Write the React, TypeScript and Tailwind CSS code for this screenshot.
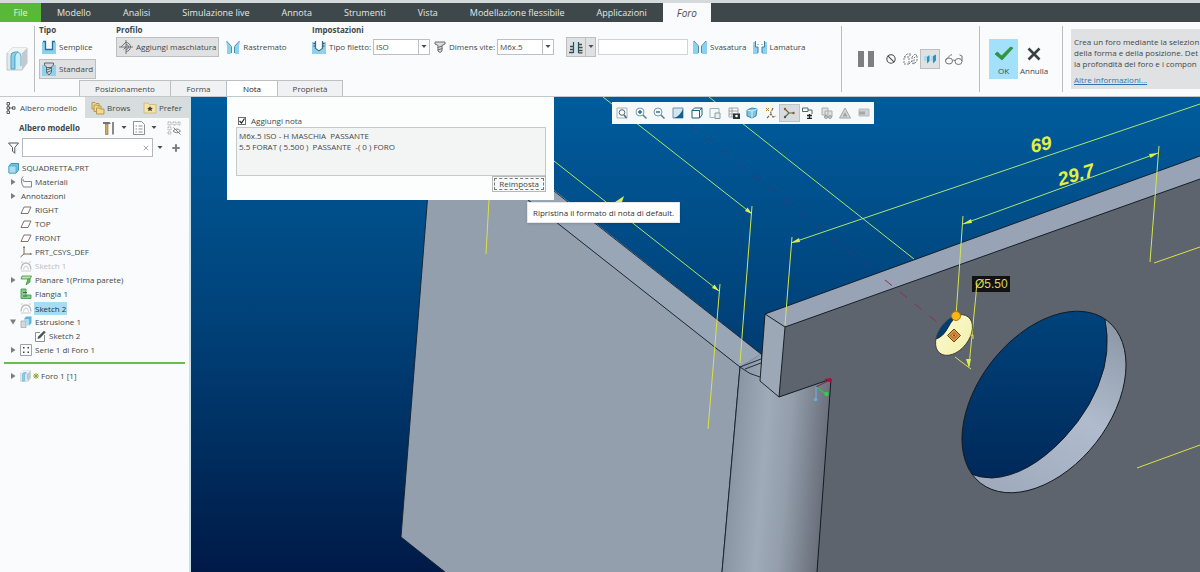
import React, { useState } from "react";
import { Ban, Plus, X } from "lucide-react";

// ---------- ribbon icons ----------

function HoleIcon({ className }: { className: string }) {
  return (
    <svg className={className} viewBox="0 0 22 24" fill="none">
      <path d="M1 6 6 1h15v15l-5 7H1z" fill="#e4e9ec" stroke="#b4bcc0" strokeWidth=".8" />
      <path d="M16 6v17l5-7V1z" fill="#c3cacf" />
      <path d="M1 6h15l5-5H6z" fill="#f2f5f6" />
      <path d="M5 22V9q0-4 4-4h3q-3 1-3 5v12z" fill="#8fd0e8" stroke="#4fa5c7" />
      <path d="M9 22V10q0-4 3-5 3 1 3 5v9" fill="#c9ecf7" stroke="#4fa5c7" strokeWidth=".8" />
    </svg>
  );
}

function SimpleIcon() {
  return (
    <svg className="size-3.5 shrink-0" viewBox="0 0 14 14" fill="none">
      <path d="M0 2h3v8h8V2h3v12H0z" fill="#8ed1ee" />
      <path d="M1 1.500h2.500v8h7v-8H13" stroke="#2b6f92" strokeWidth="1.300" />
    </svg>
  );
}

function StandardIcon() {
  return (
    <svg className="size-3.5 shrink-0" viewBox="0 0 14 14" fill="none">
      <path d="M0 3h14v11H0z" fill="#8ed1ee" />
      <path d="M2.500 1h9v2L9.500 5v5L7 13l-2.500-3V5l-2-2z" fill="#d5d8da" stroke="#5f666a" />
      <path d="m4.500 8 5-2m-5 4.500 5-2M4.500 5.500h5" stroke="#5f666a" />
    </svg>
  );
}

function TapIcon() {
  return (
    <svg className="size-3.5 shrink-0" viewBox="0 0 14 14" fill="none" stroke="#66696b" strokeWidth=".9">
      <path d="M0 7h14M7 0v14" />
      <path d="M7 2.500a4.500 4.500 0 0 1 0 9" />
      <path d="M7 4.500a2.500 2.500 0 0 1 0 5M2 7l5-5M4.500 9.500 7 7" />
    </svg>
  );
}

function TaperIcon() {
  return (
    <svg className="size-3.5 shrink-0" viewBox="0 0 14 14" fill="none">
      <path d="M0 1l5 5v8H1V6zM14 1 9 6v8h4V6z" fill="#8ed1ee" />
      <path d="m.500 1 5 5.500V13M13.500 1l-5 5.500V13" stroke="#4c8fac" />
    </svg>
  );
}

function ThreadIcon() {
  return (
    <svg className="size-3.5 shrink-0" viewBox="0 0 14 14" fill="none">
      <path d="M0 2h3v7l4 3 4-3V2h3v12H0z" fill="#8ed1ee" />
      <path d="M3.500 1v7.500L7 11l3.500-2.500V1" stroke="#3c6f88" strokeWidth="1.200" />
      <path d="M1.500 3.500h2M1.500 6h2M10.500 3.500h2M10.500 6h2" stroke="#3c4f58" />
    </svg>
  );
}

function ScrewIcon() {
  return (
    <svg className="size-3 shrink-0" viewBox="0 0 12 12" fill="none" stroke="#6a6e70">
      <path d="M1 1h10v2L8 4.500V10l-2 1.500L4 10V4.500L1 3z" fill="#d9dcdd" />
      <path d="m3.500 6.500 5-1.500m-5 4 5-1.500" />
    </svg>
  );
}

function DepthIcon() {
  return (
    <svg className="h-3.5 w-4" viewBox="0 0 16 14" fill="none">
      <path d="M6 1h4v12H6z" fill="#c4e6f2" />
      <path d="M5.500 2v11M10.500 2v11" stroke="#3f4a4f" strokeWidth="1.200" />
      <path d="M2 6.500h3.500M2 9.500h3.500M1 12.500h4.500M10.500 4.500H14M10.500 7.500h4M10.500 10.500h4M10.500 12.800h4" stroke="#3f4a4f" strokeWidth="1.300" />
    </svg>
  );
}

function CountersinkIcon() {
  return (
    <svg className="size-3.5 shrink-0" viewBox="0 0 14 14" fill="none">
      <path d="M0 1h1l4 5v8H0zM14 1h-1L9 6v8h5z" fill="#8ed1ee" />
      <path d="m1 1 4.500 5v7M13 1 8.500 6v7" stroke="#4c8fac" />
    </svg>
  );
}

function CounterboreIcon() {
  return (
    <svg className="size-3.5 shrink-0" viewBox="0 0 14 14" fill="none">
      <path d="M0 2h2v5h3v7H0zM14 2h-2v5H9v7h5z" fill="#8ed1ee" />
      <path d="M2.500 1v6H5v6M11.500 1v6H9v6" stroke="#3c7f9c" />
      <path d="M4.500 4.500h1M8.500 4.500h1" stroke="#3c7f9c" />
    </svg>
  );
}

function Caret({ className = "w-1.5" }: { className?: string }) {
  return (
    <svg className={className} viewBox="0 0 6 4">
      <path d="M.500 0h5L3 3z" fill="#4a4e50" />
    </svg>
  );
}

// ---------- ribbon ----------

const MENU = ["Modello", "Analisi", "Simulazione live", "Annota", "Strumenti", "Vista", "Modellazione flessibile", "Applicazioni"];

function MenuBar() {
  return (
    <nav className="flex h-[19px] bg-[#3e4749] text-[9px] text-[#e3e8e8]">
      <button className="w-[41px] bg-[#57b937] text-[#e2f5d6]">File</button>
      <div className="flex">
        {MENU.map((item) => (
          <button key={item} className="px-4 whitespace-nowrap">{item}</button>
        ))}
      </div>
      <button className="w-12 bg-[#f9fbfc] text-[10px] text-[#4a4f51] italic">Foro</button>
    </nav>
  );
}

function ToolButton({ icon, label, pressed }: { icon: React.ReactNode; label: string; pressed?: boolean }) {
  return (
    <button
      className={
        "flex h-5 items-center gap-[3px] border pr-0.5 pl-0.5 whitespace-nowrap " +
        (pressed ? "border-[#bcbfc0] bg-[#dfe1e2]" : "border-transparent")
      }
    >
      {icon}
      {label}
    </button>
  );
}

function Group({ title, className, children }: { title: string; className: string; children: React.ReactNode }) {
  return (
    <section className={className}>
      <h2 className="h-3.5 leading-[14px] font-bold">{title}</h2>
      {children}
    </section>
  );
}

function DropDown({ id, value }: { id: string; value: string }) {
  return (
    <span className="relative flex">
      <select id={id} className="h-4 w-[57px] appearance-none border border-[#bcc0c2] bg-white pl-0.5 leading-[14px]">
        <option>{value}</option>
      </select>
      <span className="pointer-events-none absolute inset-y-0 right-0 flex w-3 items-center justify-center border border-[#bcc0c2]">
        <Caret />
      </span>
    </span>
  );
}

const SUBTABS = [
  { label: "Posizionamento", cls: "w-[92px]" },
  { label: "Forma", cls: "w-14" },
  { label: "Nota", cls: "w-[51px]" },
  { label: "Proprietà", cls: "w-[65px]" },
];

function Ribbon() {
  return (
    <header className="flex h-[75px] border-b border-[#c3c8ca] bg-[#f9fbfc]">
      <div className="my-1 flex w-[35px] shrink-0 items-center justify-center border-r border-[#b9bec0]">
        <HoleIcon className="h-6 w-[22px]" />
      </div>

      <div className="flex min-w-0 flex-1 flex-col pt-px pl-1">
        <div className="flex">
          <Group title="Tipo" className="w-[77px]">
            <div className="flex flex-col items-start gap-0.5">
              <ToolButton icon={<SimpleIcon />} label="Semplice" />
              <ToolButton icon={<StandardIcon />} label="Standard" pressed />
            </div>
          </Group>
          <Group title="Profilo" className="w-[196px]">
            <div className="flex gap-1">
              <ToolButton icon={<TapIcon />} label="Aggiungi maschiatura" pressed />
              <ToolButton icon={<TaperIcon />} label="Rastremato" />
            </div>
          </Group>
          <Group title="Impostazioni" className="flex-1">
            <div className="flex h-5 items-center whitespace-nowrap">
              <ThreadIcon />
              <label htmlFor="thread" className="w-[47px] pl-[3px]">Tipo filetto:</label>
              <DropDown id="thread" value="ISO" />
              <span className="w-1" />
              <ScrewIcon />
              <label htmlFor="screw" className="w-[51px] pl-[3px]">Dimens vite:</label>
              <DropDown id="screw" value="M6x.5" />
              <button aria-label="Profondità" className="ml-3 flex h-5 w-[30px] items-center border border-[#bcbfc0] bg-[#dfe1e2]">
                <span className="flex flex-1 justify-center"><DepthIcon /></span>
                <span className="flex h-full w-2.5 items-center justify-center border-l border-[#bcbfc0]"><Caret /></span>
              </button>
              <input aria-label="Valore" className="mx-0.5 h-4 w-[90px] border border-[#d0d4d5] bg-white px-1" />
              <ToolButton icon={<CountersinkIcon />} label="Svasatura" />
              <ToolButton icon={<CounterboreIcon />} label="Lamatura" />
            </div>
          </Group>
        </div>
        <div className="mt-auto ml-10 flex">
          {SUBTABS.map((tab) => (
            <button
              key={tab.label}
              className={
                "h-4 border border-b-0 border-[#bcc0c2] leading-[14px] not-first:border-l-0 " +
                tab.cls +
                (tab.label === "Nota" ? " bg-white text-[#222]" : " bg-[#f0f1f2]")
              }
            >
              {tab.label}
            </button>
          ))}
        </div>
      </div>

      <div className="my-1 flex w-[138px] shrink-0 items-center border-l border-[#b9bec0] pl-4">
        <button aria-label="Pausa" className="flex gap-1">
          <span className="h-4 w-1.5 bg-[#7d7f80]" />
          <span className="h-4 w-1.5 bg-[#7d7f80]" />
        </button>
        <button aria-label="Nessuna anteprima" className="ml-3"><Ban className="size-2.5" strokeWidth={2.5} /></button>
        <button aria-label="Anteprima non collegata" className="ml-1.5">
          <svg className="h-3 w-4" viewBox="0 0 16 12" fill="none" stroke="#7b8082" strokeDasharray="2 1">
            <path d="M2 4h5v7H2zM2 4l3-3h4L7 4M7 11l3-3M10 4l3-3 2 1-3 3v6l3-3V2M10 4v6l2 1" />
          </svg>
        </button>
        <button aria-label="Anteprima collegata" className="ml-0.5 flex size-5 items-center justify-center border border-[#bcbfc0] bg-[#dfe1e2]">
          <svg className="h-2.5 w-3" viewBox="0 0 12 10">
            <path d="M0 2h4v5H0zM7 2h3v5H7z" fill="#a8dcef" />
            <path d="m3 3 2.500-2v6L3 9.500zM9 2l3-1.500v6L9 9.500z" fill="#3191bd" />
          </svg>
        </button>
        <button aria-label="Verifica" className="ml-1">
          <svg className="h-3 w-5" viewBox="0 0 20 12" fill="none" stroke="#707577">
            <ellipse cx="5" cy="8" rx="3.500" ry="3" />
            <ellipse cx="14.500" cy="8.500" rx="3.500" ry="3" />
            <path d="M8.500 7.500q1.200-1 2.500 0M1.500 7 7 1.500l1 .8M18 8V3l-2.500-1.200" />
          </svg>
        </button>
      </div>

      <div className="my-1 flex w-[83px] shrink-0 items-center border-l border-[#b9bec0] pl-[9px]">
        <button className="flex h-10 w-[29px] flex-col items-center justify-end bg-[#a3e0fa] pb-0.5">
          <svg className="mb-1 h-[15px] w-5" viewBox="0 0 20 15">
            <path d="m1 8 2.500-2 4 4L16.500 1 19 2 8 14z" fill="#2d9a3c" stroke="#22762e" strokeWidth=".6" />
          </svg>
          OK
        </button>
        <button className="ml-0.5 flex h-10 flex-col items-center justify-end pb-0.5">
          <svg className="mb-1 h-3.5 w-3.5" viewBox="0 0 14 14" stroke="#3c4143" strokeWidth="2.600">
            <path d="m1.500 1.500 11 11M12.500 1.500l-11 11" />
          </svg>
          Annulla
        </button>
      </div>

      <div className="my-1 w-[138px] shrink-0 border-l border-[#b9bec0] pt-[3px] pl-2">
        <div className="h-[60px] bg-[#dfe1e3] pt-[7px] pl-[3px] leading-[11px] whitespace-nowrap">
          <p>Crea un foro mediante la selezion</p>
          <p>della forma e della posizione. Det</p>
          <p>la profondità del foro e i compon</p>
          <a href="#info" className="mt-[5px] block text-[#3573b0] underline">Altre informazioni...</a>
        </div>
      </div>
    </header>
  );
}

// ---------- model tree ----------

type Kind = "part" | "material" | "plane" | "csys" | "sketch" | "wall" | "flange" | "extrude" | "edit" | "pattern" | "hole" | "none";

function TreeIcon({ kind }: { kind: Kind }) {
  if (kind === "none") return null;
  if (kind === "hole") return <HoleIcon className="h-3 w-[11px]" />;
  return (
    <svg className="size-3 shrink-0" viewBox="0 0 12 12" fill="none">
      {kind === "part" && (
        <>
          <path d="M2 4 4 1.500h7.500V8L9 11H2z" fill="#6fc3e0" stroke="#3d96b8" />
          <path d="M2 4h7v7H2z" fill="#a9dff0" stroke="#4aa0c0" strokeWidth=".7" />
        </>
      )}
      {kind === "material" && <path d="M3 .500Q.500 3 1.500 6q.500 3 2 5h8V5.500H5Q2.500 6 3 3" stroke="#74797b" strokeWidth=".9" />}
      {kind === "plane" && <path d="M4 3h7L8 9.500H1z" stroke="#74675a" strokeWidth=".9" />}
      {kind === "csys" && (
        <>
          <path d="M4 .500v7.500M4 8h7.500M4 8l-3.500 3" stroke="#7a6a55" />
          <path d="M3 2 4 0l1 2zM10 7l2 1-2 1z" fill="#7a6a55" />
        </>
      )}
      {kind === "sketch" && (
        <>
          <path d="M1 9.500Q1.500 3 6 3t5 6.500" stroke="#b9bcbd" strokeWidth="1.300" />
          <path d="M3.500 9.500Q4 6 6 6t2.500 3.500M1 2h2M9 2h2M1 11h10" stroke="#c9cccd" />
        </>
      )}
      {kind === "wall" && (
        <>
          <path d="M2 2h9.500L10 5H1z" fill="#b4e8a0" stroke="#3f8f45" strokeWidth=".8" />
          <path d="M10 5v3l-4 3 2-6z" fill="#6cbf62" stroke="#3f8f45" strokeWidth=".8" />
        </>
      )}
      {kind === "flange" && (
        <>
          <path d="M1 1h5v6h5v3.500H1z" fill="#7fcf86" stroke="#3f8f55" strokeWidth=".8" />
          <path d="M3 4.500h4M3 8h4" stroke="#2f6e48" />
        </>
      )}
      {kind === "extrude" && (
        <>
          <path d="M1 5h5v6.500H1z" fill="#d4d8da" stroke="#9fa5a8" strokeWidth=".7" />
          <path d="M4 3 6 .500h5.500V7L9 9.500V3z" fill="#62b5d6" />
          <path d="M4 3h5v6.500H6V5H4z" fill="#a9dff0" />
        </>
      )}
      {kind === "edit" && (
        <>
          <path d="M10.500 5v6.500h-9v-9H6" stroke="#8b8f91" />
          <path d="m3.500 9 .7-2.500L10 .700l1.700 1.600L6 8.300z" fill="#4d5254" />
        </>
      )}
      {kind === "pattern" && (
        <>
          <path d="M.500.500h11v11H.500z" stroke="#9ea2a4" />
          <path d="M3 3h1.500v1.500H3zM7.500 3H9v1.500H7.500zM3 7.500h1.500V9H3zM7.500 7.500H9V9H7.500z" fill="#3f4446" />
        </>
      )}
    </svg>
  );
}

type Row = { label: string; kind: Kind; arrow?: "right" | "down"; depth?: number; dim?: boolean; selected?: boolean };

const ROWS: Row[] = [
  { label: "Materiali", kind: "material", arrow: "right" },
  { label: "Annotazioni", kind: "none", arrow: "right" },
  { label: "RIGHT", kind: "plane" },
  { label: "TOP", kind: "plane" },
  { label: "FRONT", kind: "plane" },
  { label: "PRT_CSYS_DEF", kind: "csys" },
  { label: "Sketch 1", kind: "sketch", dim: true },
  { label: "Planare 1(Prima parete)", kind: "wall", arrow: "right" },
  { label: "Flangia 1", kind: "flange" },
  { label: "Sketch 2", kind: "sketch", selected: true },
  { label: "Estrusione 1", kind: "extrude", arrow: "down" },
  { label: "Sketch 2", kind: "edit", depth: 1 },
  { label: "Serie 1 di Foro 1", kind: "pattern", arrow: "right" },
];

function Arrow({ dir }: { dir?: "right" | "down" }) {
  return (
    <svg className="mr-2 ml-2.5 size-1.5 shrink-0" viewBox="0 0 6 6" fill="#7a7e80">
      {dir === "right" && <path d="M1 0 5.500 3 1 6z" />}
      {dir === "down" && <path d="M0 .500h6L3 5.500z" />}
    </svg>
  );
}

function TreeRow({ row }: { row: Row }) {
  return (
    <li className={"flex h-3.5 items-center whitespace-nowrap " + (row.depth ? "pl-3.5" : "")}>
      <Arrow dir={row.arrow} />
      <span className="-ml-1 flex items-center gap-0.5">
        {row.kind !== "none" && <TreeIcon kind={row.kind} />}
        <span className={row.selected ? "bg-[#a6dcf6] px-px leading-[13px] text-[#234]" : row.dim ? "px-px text-[#b9bdbf]" : "px-px"}>
          {row.label}
        </span>
      </span>
    </li>
  );
}

function Sidebar() {
  return (
    <aside className="flex w-[191px] shrink-0 flex-col border-r-2 border-[#c9e0ea] bg-[#f9fbfc]">
      <div className="flex h-[21px] bg-[#d7dddd]">
        <button className="flex w-[85px] items-center gap-1 bg-[#f9fbfc] pl-1.5 whitespace-nowrap">
          <svg className="h-3 w-2.5 shrink-0" viewBox="0 0 10 12" fill="none" stroke="#55595c">
            <path d="M1 .500h2.500V3H1zM1 4.800h2.500v2.400H1zM1 9h2.500v2.500H1zM6.500 4.800H9v2.400H6.500zM2.200 3v2M2.200 7v2M3.500 6h3" />
          </svg>
          Albero modello
        </button>
        <button className="flex w-12 items-center gap-0.5 pl-1.5">
          <svg className="size-3.5 shrink-0" viewBox="0 0 14 14" fill="#f2d98c" stroke="#a58a45" strokeWidth=".8">
            <path d="M1 1.500h3l1 1h3V8H1z" />
            <path d="M3 4h3l1 1h3v5.500H3z" />
            <path d="M5.500 7h3l1 1H13v5H5.500z" />
          </svg>
          <span>Brows</span>
        </button>
        <button className="flex flex-1 items-center gap-0.5 pl-2.5">
          <svg className="h-3 w-3.5 shrink-0" viewBox="0 0 14 12">
            <path d="M1 1h4l1 1.500h7V11H1z" fill="#f5e3a8" stroke="#c9b57e" strokeWidth=".8" />
            <path d="m7 4 .9 1.800 2 .2-1.500 1.300.5 2L7 8.200l-1.900 1.100.5-2L4.100 6l2-.2z" fill="#3f3b30" />
          </svg>
          <span>Prefer</span>
        </button>
      </div>

      <div className="flex h-5 items-center pl-[19px]">
        <h2 className="flex-1 font-bold">Albero modello</h2>
        <button aria-label="Impostazioni" className="flex items-center gap-1.5">
          <svg className="h-3.5 w-3" viewBox="0 0 12 14">
            <path d="M0 1h6.500L8 3H0z" fill="#6f7476" />
            <path d="M2.500 3H5v10.500H2.500z" fill="#d3a55c" stroke="#8a6b38" strokeWidth=".6" />
            <path d="M9 1h2v12.500H9z" fill="#858a8c" />
          </svg>
          <Caret />
        </button>
        <button aria-label="Mostra" className="ml-1.5 flex items-center gap-1.5">
          <svg className="h-3.5 w-3" viewBox="0 0 12 14" fill="none" stroke="#7e8385" strokeWidth=".9">
            <path d="M.500.500h8l3 3v10H.500z" fill="#fff" />
            <path d="M5.500 5h4M5.500 8h4M5.500 11h4M2.500 5h1.500M2.500 8h1.500M2.500 11h1.500" />
          </svg>
          <Caret />
        </button>
        <button aria-label="Nascondi" className="mr-2 ml-2.5">
          <svg className="size-3.5" viewBox="0 0 14 14" fill="none" stroke="#a9adaf">
            <path d="M1 1h3v3H1zM1 6h3v3H1zM1 11h3v2H1zM6 1h3v3H6zM11 1h2v3h-2z" strokeDasharray="1.500 .700" />
            <path d="M6 10q4-4 7.500 0-3.500 3.500-7.500 0zM6.500 6.500l7 7" stroke="#7e8385" />
          </svg>
        </button>
      </div>

      <div className="flex h-[19px] items-center pl-2">
        <svg className="mr-[3px] h-3 w-[11px] shrink-0" viewBox="0 0 11 12" fill="none" stroke="#55595c">
          <path d="M.500 1h10L6.800 5.500v5.800L4.500 9V5.500z" />
        </svg>
        <label className="flex h-[19px] flex-1 items-center border border-[#b5b9bb] bg-white pr-0.5">
          <input aria-label="Filtro" className="w-full min-w-0 px-1 outline-none" />
          <X className="size-2 shrink-0 text-[#7b7f81]" />
        </label>
        <button aria-label="Opzioni filtro" className="ml-1"><Caret /></button>
        <button aria-label="Aggiungi" className="mr-2 ml-2"><Plus className="size-2.5 text-[#7c8082]" strokeWidth={5} /></button>
      </div>

      <ul className="pt-1">
        <li className="flex h-3.5 items-center gap-[3px] pl-[7px]">
          <TreeIcon kind="part" />
          SQUADRETTA.PRT
        </li>
        {ROWS.map((row, i) => (
          <TreeRow key={i} row={row} />
        ))}
        <li className="mx-1 my-[5px] h-0.5 bg-[#6cba52]" />
        <li className="flex h-3.5 items-center whitespace-nowrap">
          <Arrow dir="right" />
          <span className="-ml-1 flex items-center gap-0.5">
            <TreeIcon kind="hole" />
            <svg className="size-1.5" viewBox="0 0 6 6" stroke="#8a9a1e" strokeWidth=".9">
              <path d="M3 0v6M0 3h6M.700.700l4.600 4.600M5.300.700.700 5.300" />
            </svg>
            Foro 1 [1]
          </span>
        </li>
      </ul>
    </aside>
  );
}

// ---------- graphics area ----------

function Scene() {
  return (
    <svg className="absolute inset-0 size-full" viewBox="191 97 1009 475" preserveAspectRatio="xMinYMin slice">
      <defs>
        <linearGradient id="sky" gradientUnits="userSpaceOnUse" x1="0" y1="97" x2="0" y2="572">
          <stop offset="0" stopColor="#005c9c" />
          <stop offset=".45" stopColor="#00437b" />
          <stop offset="1" stopColor="#001a47" />
        </linearGradient>
        <linearGradient id="bend" gradientUnits="userSpaceOnUse" x1="730" y1="460" x2="826" y2="468">
          <stop offset="0" stopColor="#8894a1" />
          <stop offset=".35" stopColor="#9fabb9" />
          <stop offset=".6" stopColor="#939dab" />
          <stop offset="1" stopColor="#686e79" />
        </linearGradient>
        <linearGradient id="bore" gradientUnits="userSpaceOnUse" x1="1110" y1="320" x2="1010" y2="490">
          <stop offset="0" stopColor="#8c97a6" />
          <stop offset=".5" stopColor="#b0bccd" />
          <stop offset="1" stopColor="#a0acbd" />
        </linearGradient>
        <linearGradient id="cut" x1="0" x2="1" y1="0" y2="1">
          <stop offset="0" stopColor="#fffde0" />
          <stop offset="1" stopColor="#f0ec9c" />
        </linearGradient>
        <clipPath id="boreClip">
          <ellipse cx="1044" cy="402" rx="103" ry="66" transform="rotate(-52 1044 402)" />
        </clipPath>
        <clipPath id="smallClip">
          <ellipse cx="954" cy="335" rx="23" ry="15" transform="rotate(-52 954 335)" />
        </clipPath>
      </defs>
      <path d="M191 97h1009v475H191z" fill="url(#sky)" />

      {/* left plate */}
      <path d="M429 180 401 537l44 35h277l18-205-222-175z" fill="#939fad" />
      <path d="M518 192 740 367l21-13-207-164-10-10z" fill="#99a6b6" />
      <path d="M429 180 401 537l44 35M518 192l222 175-18 205M540 180l221 174" fill="none" stroke="#15202b" strokeWidth=".9" />

      {/* bend */}
      <path d="m740 367 21-13v24l18 19 52-18-14 193h-95z" fill="url(#bend)" />
      <path d="m740 367 21-8M740 367q10 8 20 10M745 369l16-6" fill="none" stroke="#15202b" strokeWidth=".9" />
      <path d="m740 367-18 205" stroke="#15202b" strokeWidth=".9" />

      {/* right plate */}
      <path d="m785 327 415-148v393H817l14-193-52 18z" fill="#5d646d" />
      <path d="m765 314 435-158v23L785 327z" fill="#98a4b5" />
      <path d="m765 314 20 13-6 70-19-16z" fill="#9da8b7" />
      <path d="m765 314 435-158M785 327l415-148M765 314l20 13-6 70-19-16zM779 397l52-18-14 193" fill="none" stroke="#10161d" strokeWidth=".9" />

      {/* big hole */}
      <g clipPath="url(#boreClip)">
        <path d="M950 300h190v200H950z" fill="url(#bore)" />
        <path d="M950 300h150q12 36 4 68-10 38-40 70-36 38-72 40-12 0-24-5l-18-20z" fill="url(#sky)" stroke="#10161d" strokeWidth=".9" />
      </g>
      <ellipse cx="1044" cy="402" rx="103" ry="66" transform="rotate(-52 1044 402)" fill="none" stroke="#10161d" strokeWidth=".9" />

      {/* dimension lines */}
      <g fill="none" stroke="#a9e66e" strokeWidth="1">
        <path d="m603 97 148 116M709 97l205 162M554 161l165 130M791 243l409-139M963 224l195-71" />
        <path d="M752 206l-12 157M792 237l-7 88M963 216l-7 100M1159 146l-9 116" stroke="#d3e552" />
        <path d="M720 284l-12 145M489 200l-3 54M1154 263l46-16M1137 468l63-23" stroke="#dbe04a" />
        <path d="M977 284l-8 82M955 357l16 12" stroke="#dbe04a" />
      </g>
      <g fill="#dcee4c">
        <path d="m752 214-7-3 2.500-3.500zM719 291l-7-3 2.500-3.500zM791 243l8-5 1 4zM963 224l8-5 1 4zM1158 153l-9 1 1.500 4zM969 368l-3-9h5zM615 202l9-6-2 6z" />
      </g>

      {/* hole axis */}
      <path d="m690 125 185 147" stroke="#5c2c6c" strokeWidth="1" strokeDasharray="8 12" opacity=".7" />
      <path d="m885 280 57 46" stroke="#8d3050" strokeWidth="1" strokeDasharray="9 10" />

      {/* small hole */}
      <g clipPath="url(#smallClip)">
        <path d="M930 305h50v60h-50z" fill="url(#cut)" />
        <path d="M930 340q10 0 16-9 4-8 10-15l-26-8z" fill="#003f75" stroke="#10161d" strokeWidth=".8" />
      </g>
      <ellipse cx="954" cy="335" rx="23" ry="15" transform="rotate(-52 954 335)" fill="none" stroke="#2a2a20" strokeWidth=".7" />
      <path d="M969 335h4v4" fill="none" stroke="#e0e04a" />
      <circle cx="956" cy="316" r="4.500" fill="#f7b719" stroke="#b97806" />
      <path d="m954 329 6.500 6.500-6.500 6.500-6.500-6.500z" fill="#d9963e" stroke="#6e4214" />
      <path d="m954 332.500 3 3-3 3-3-3z" fill="#e9b264" stroke="#6e4214" strokeWidth=".8" />
      <circle cx="954" cy="335.500" r="1" fill="#c00" />

      {/* coordinate triad */}
      <path d="m816 387 14-7" stroke="#7b2744" strokeWidth="1" />
      <path d="m824 379 7-1v5z" fill="#a3133c" />
      <path d="m816 387 10 7" stroke="#35c14b" strokeWidth="1.200" />
      <circle cx="826.500" cy="394" r="2.200" fill="#2fd043" />
      <path d="M816 387v12" stroke="#6ea8dc" strokeWidth="1.200" />
      <circle cx="815.500" cy="399.500" r="1.800" fill="#6ea8dc" />

      <g className="font-['Liberation_Sans',sans-serif]" fill="#e4f03e">
        <g fontSize="19" fontWeight="bold" fontStyle="italic">
          <text transform="translate(1032 153) rotate(-12)">69</text>
          <text transform="translate(1060 186) rotate(-16)">29.7</text>
        </g>
        <path d="M972 276h38v16h-38z" fill="#111" />
        <text x="975" y="288" fontSize="12" fill="#d5d95c">Ø5.50</text>
      </g>
      <path d="m976 292 1-9" stroke="#dbe04a" />
    </svg>
  );
}

const VIEW_TOOLS: { name: string; on?: boolean; art: React.ReactNode }[] = [
  { name: "Adatta", art: <><path d="M1 1h10v10H1z" stroke="#a5b4bb" /><circle cx="6" cy="5.500" r="2.800" stroke="#4f6a78" /><path d="m8 8 2.500 3" stroke="#4f6a78" strokeWidth="1.500" /></> },
  { name: "Zoom avanti", art: <><circle cx="5" cy="5" r="4" stroke="#7e98a6" /><path d="M3 5h4M5 3v4" stroke="#1c6fa5" strokeWidth="1.400" /><path d="m8 8 3.500 3.500" stroke="#5f7c8c" strokeWidth="1.500" /></> },
  { name: "Zoom indietro", art: <><circle cx="5" cy="5" r="4" stroke="#7e98a6" /><path d="M3 5h4" stroke="#1c6fa5" strokeWidth="1.400" /><path d="m8 8 3.500 3.500" stroke="#5f7c8c" strokeWidth="1.500" /></> },
  { name: "Ridisegna", art: <><path d="M1 1h10v10H1z" fill="#d3e6ee" stroke="#6c93a6" /><path d="M11 2v9H2q6-2 9-9z" fill="#14618f" /></> },
  { name: "Stile", art: <><path d="M1 3.500 3.500 1H11v7L8.500 11H1z" fill="#fff" stroke="#1f5f7a" /><path d="M1 3.500h7.500V11M8.500 3.500 11 1" stroke="#1f5f7a" /></> },
  { name: "Viste", art: <><path d="M1 1.500h9v9H1z" stroke="#9fb3bd" /><path d="M6 6h5v5.500H6z" fill="#e8eef0" stroke="#8c9ba2" /></> },
  { name: "Gestione viste", art: <><path d="M1 1h9v9H1zM1 4h9M1 7h9M4 1v9" stroke="#8b9498" strokeWidth=".8" /><path d="M5 6.500h7V12H5z" fill="#2c3336" /><circle cx="8.500" cy="9" r="1.300" fill="#fff" /></> },
  { name: "Prospettiva", art: <><path d="m1 3 5-2 5 1-1 7-4 2-5-2z" fill="#7fc4e2" stroke="#3a86aa" /><path d="M1 3l5 1 5-2M6 4v7" stroke="#d8f0f8" /></> },
  { name: "Riferimenti", art: <><path d="m1 1 3 3M4 1 1 4" stroke="#b5762e" /><path d="M8 1 5.500 6M2 11l4-4 2 3 3-1" stroke="#7a6a4f" strokeDasharray="3 1" strokeWidth="1.200" /></> },
  { name: "Annotazioni", on: true, art: <><path d="M2 2l4 4-4 4M6 6h5" stroke="#5e6a4d" strokeWidth="1.200" /><circle cx="2" cy="2" r="1.200" fill="#8c5b2b" /><circle cx="2" cy="10" r="1.200" fill="#555" /><circle cx="10.500" cy="6" r="1.200" fill="#8c5b2b" /></> },
  { name: "Centro rotazione", art: <><path d="M.500 1H6v3.500H.500zM6 3h4v4" stroke="#54666f" /><path d="M5 8.500h5M7.500 7v4.500M5 11.500h5" stroke="#222" strokeWidth="1.300" /></> },
  { name: "Simula", art: <><path d="M1 1h6v7H1zM4 4h7v6H4z" stroke="#a8adb0" fill="#dfe2e3" /><circle cx="5" cy="10" r="1.500" stroke="#999" /><circle cx="9" cy="10" r="1.500" stroke="#999" /></> },
  { name: "Avvisi", art: <><path d="M6 1 11.500 11H.500z" fill="#d5d8da" stroke="#9fa4a7" /><path d="M6 5 8.500 9.500h-5z" fill="#9fa4a7" /></> },
  { name: "Flusso", art: <><path d="M1 2h10v7H1z" fill="#cdd1d3" stroke="#b5babd" /><path d="M1 4.500h6v3H1z" fill="#a3a8ab" /></> },
];

function ViewToolbar() {
  return (
    <div className="absolute top-[5px] left-[421px] flex h-[22px] w-[262px] items-center bg-[#f5f9fa] px-px">
      {VIEW_TOOLS.map((tool) => (
        <button
          key={tool.name}
          aria-label={tool.name}
          className={"flex h-4 flex-1 items-center justify-center " + (tool.on ? "bg-[#d9dcde] outline outline-[#bfc3c5]" : "")}
        >
          <svg className="size-3" viewBox="0 0 12 12" fill="none">{tool.art}</svg>
        </button>
      ))}
    </div>
  );
}

function NotePanel() {
  const [addNote, setAddNote] = useState(true);
  const [note, setNote] = useState("M6x.5 ISO - H MASCHIA  PASSANTE\n5.5 FORAT ( 5.500 )  PASSANTE  -( 0 ) FORO");

  return (
    <div className="absolute top-0 left-9 flex h-[103px] w-[327px] flex-col bg-[#fcfdfd] pt-[18px] pr-2 pl-[9px]">
      <label className="flex h-3 items-center gap-[3px]">
        <span className="relative flex size-3 items-center justify-center">
          <input
            type="checkbox"
            checked={addNote}
            onChange={(e) => setAddNote(e.target.checked)}
            className="size-2 appearance-none border border-[#6a6e70] bg-white"
          />
          {addNote && (
            <svg className="pointer-events-none absolute size-1.5" viewBox="0 0 6 6" fill="none" stroke="#222" strokeWidth="1.200">
              <path d="m.500 3 2 2 3-4.500" />
            </svg>
          )}
        </span>
        Aggiungi nota
      </label>
      <textarea
        aria-label="Nota"
        value={note}
        onChange={(e) => setNote(e.target.value)}
        className="h-[49px] shrink-0 resize-none border border-[#c6c9ca] bg-[#f3f4f4] px-0.5 py-0.5 leading-[11px] whitespace-pre"
      />
      <button className="self-end border border-[#b5b9bb] bg-[#f7f8f8] p-px">
        <span className="block h-3 border border-dashed border-[#777] px-1 leading-[10px]">Reimposta</span>
      </button>
    </div>
  );
}

function App() {
  return (
    <div className="flex min-h-screen flex-col bg-[#f9fbfc] font-['Open_Sans',sans-serif] text-[8px] leading-3 text-[#43484a]">
      <div className="h-[3px] bg-[#d3dadb]" />
      <MenuBar />
      <Ribbon />
      <div className="flex flex-1">
        <Sidebar />
        <main className="relative min-w-0 flex-1 overflow-hidden bg-[#00437b]">
          <Scene />
          <NotePanel />
          <ViewToolbar />
          <div role="tooltip" className="absolute top-[105px] left-[336px] border border-[#e4e6e7] bg-white px-[5px] py-1 leading-[11px] whitespace-nowrap text-[#333] shadow-sm">
            Ripristina il formato di nota di default.
          </div>
        </main>
      </div>
    </div>
  );
}

export default App;
